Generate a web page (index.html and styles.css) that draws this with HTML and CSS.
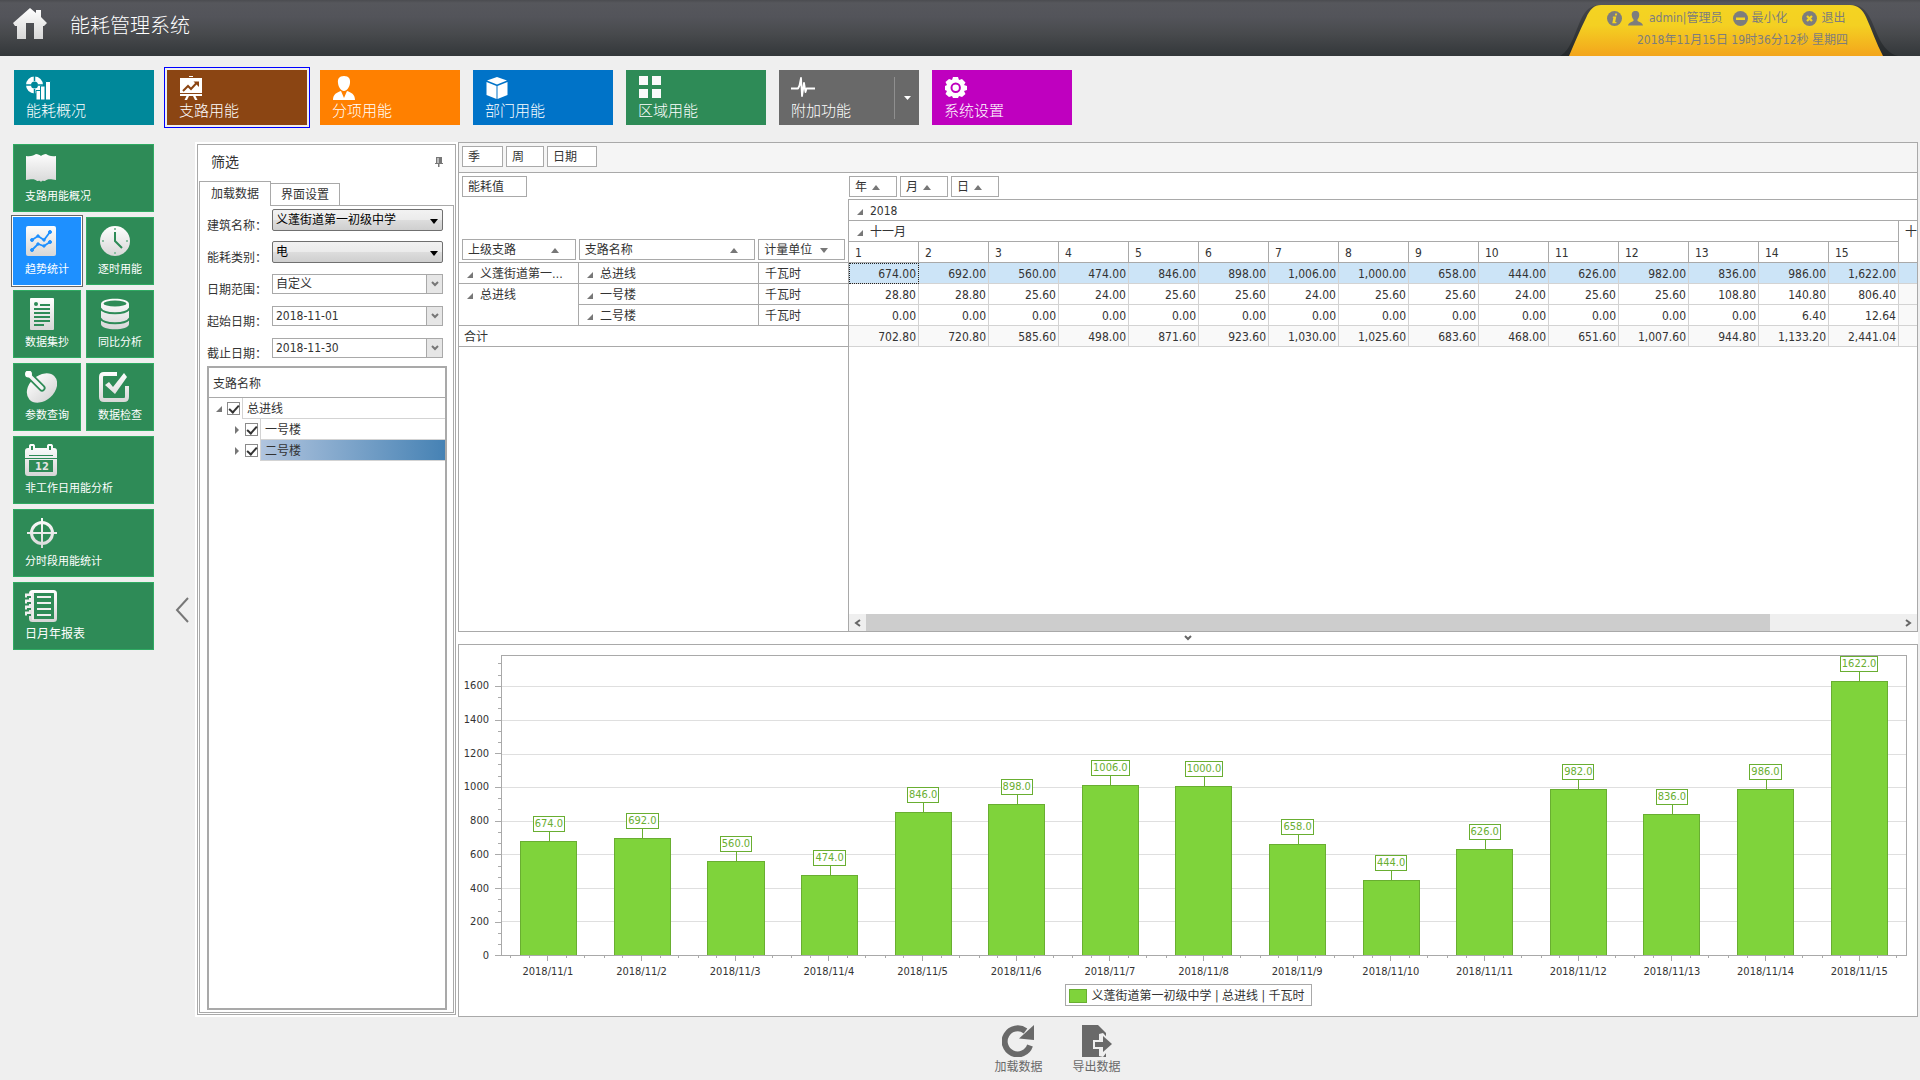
FILE: index.html
```html
<!DOCTYPE html>
<html lang="zh-CN">
<head>
<meta charset="utf-8">
<title>能耗管理系统</title>
<link rel="stylesheet" href="styles.css">
</head>
<body>
<svg class="defs" aria-hidden="true">
  <defs>
    <linearGradient id="silver" x1="0" y1="0" x2="0" y2="32" gradientUnits="userSpaceOnUse"><stop offset="0" stop-color="#fff"/><stop offset="1" stop-color="#d6d6d6"/></linearGradient>
    <linearGradient id="amber" x1="0" y1="0" x2="0" y2="1"><stop offset="0" stop-color="#f4d422"/><stop offset=".4" stop-color="#f4d022"/><stop offset="1" stop-color="#f3a51c"/></linearGradient>
    <linearGradient id="shade" x1="0" y1="0" x2="0" y2="1"><stop offset="0" stop-color="#45464a"/><stop offset="1" stop-color="#25292b"/></linearGradient>
  </defs>
</svg>

<header class="topbar">
  <a class="home" href="#" aria-label="首页">
    <svg width="34" height="32" viewBox="0 0 34 32"><path fill="url(#silver)" d="M0 15 17 0 23 5V2h5v7l6 6-3 3h-1v13H21V15h-8v16H4V18H2z"/></svg>
  </a>
  <h1>能耗管理系统</h1>
  <div class="account">
    <svg class="account-bg" width="340" height="56" viewBox="0 0 340 56" aria-hidden="true">
      <path fill="url(#shade)" d="M0 56C13 49 16 26 24 14 28 8 33 5 41 5H290C300 5 304 8 309 16 317 30 320 51 338 56z"/>
      <path fill="url(#amber)" d="M9 56C15 42 20 30 26 18 30 9 34 5 41 5H290C298 5 303 10 306 17 312 30 316 43 323 56z"/>
    </svg>
    <div class="account-row">
      <a href="#" aria-label="关于"><svg width="15" height="15" viewBox="0 0 15 15"><circle cx="7.500" cy="7.500" r="7.500" fill="#7d7d7d"/><path d="M8.200 2.500h2l-.4 2h-2zM6 5.500h3.300L8.200 11h1.300l-.3 1.200H5.300L6.400 6.700H5.700z" fill="#f4d422"/></svg></a>
      <a class="user" href="#"><svg width="15" height="15" viewBox="0 0 15 15"><path fill="#7d7d7d" d="M7.500 0c3 0 4 2 3.700 4.500-.2 2-1 3-1.700 4V10c1.500 1 5 1.500 5.500 4.500H0C.5 11.500 4 11 5.500 10V8.500c-.7-1-1.500-2-1.700-4C3.500 2 4.500 0 7.500 0z"/></svg><span>admin|管理员</span></a>
      <button type="button"><svg width="15" height="15" viewBox="0 0 15 15"><circle cx="7.500" cy="7.500" r="7.500" fill="#7d7d7d"/><path d="M3 6.500h9v2.500H3z" fill="#f4d422"/></svg><span>最小化</span></button>
      <button type="button" class="exit"><svg width="15" height="15" viewBox="0 0 15 15"><circle cx="7.500" cy="7.500" r="7.500" fill="#7d7d7d"/><path d="m5 5 5 5m0-5-5 5" stroke="#f4d422" stroke-width="2.200"/></svg><span>退出</span></button>
    </div>
    <time class="clock">2018年11月15日 19时36分12秒 星期四</time>
  </div>
</header>

<nav class="modules">
  <a class="module teal" href="#"><svg width="25" height="24" viewBox="0 0 25 24"><g fill="none" stroke="#fff" stroke-width="5"><circle cx="8.500" cy="9" r="6"/></g><path d="M8.500 0v5M8.500 13v6M0 9h5M12 9h6" stroke="#00889a" stroke-width="1.500"/><path fill="#fff" stroke="#00889a" d="M10 14.500h4.500V24H10zM14.500 10h4.500v14h-4.500zM19.500 5.500H24.500V24h-5z"/></svg><span>能耗概况</span></a>
  <a class="module brown active" href="#"><svg width="24" height="24" viewBox="0 0 24 24"><path fill="#fff" d="M10 0h4v1h-4zM1 2h22v15H1zM1 18h22v2H1zM7.500 20h2.500L8 24H5.500zM14 20h2.500l2 4H16z"/><path d="m4 15 5-5 3 3 6-6.500" fill="none" stroke="#8b4513" stroke-width="2"/><path d="M14.500 5.500H20V11z" fill="#8b4513"/></svg><span>支路用能</span></a>
  <a class="module orange" href="#"><svg width="24" height="24" viewBox="0 0 24 24"><path fill="#fff" d="M12 0c5 0 6.500 3 6 7-.4 4-3 8-6 8S6.400 11 6 7C5.500 3 7 0 12 0zM9 15l3 7 3-7c4 1.500 8 3 8 9H1c0-6 4-7.500 8-9z"/></svg><span>分项用能</span></a>
  <a class="module blue" href="#"><svg width="24" height="24" viewBox="0 0 24 24"><path fill="#fff" d="M12 1 22 4.500 12 8.500 2 4.500zM1.500 6l10 4v13l-10-4zM22.500 6l-10 4v13l10-4z"/></svg><span>部门用能</span></a>
  <a class="module green" href="#"><svg width="24" height="24" viewBox="0 0 24 24"><path fill="#fafafa" d="M1 0h9v9H1zM14 0h9v9h-9zM1 13h9v9H1zM14 13h9v9h-9z"/></svg><span>区域用能</span></a>
  <a class="module gray" href="#"><svg width="24" height="24" viewBox="0 0 24 24"><path d="M0 12.500h7l1.500-3L10 2l1 18 2-13 1.500 9 1-3.500H24" fill="none" stroke="#fff" stroke-width="1.800" stroke-linejoin="round"/></svg><span>附加功能</span><i class="more"><svg width="7" height="4" viewBox="0 0 7 4"><path d="M0 0h7L3.500 4z" fill="#fff"/></svg></i></a>
  <a class="module purple" href="#"><svg width="24" height="24" viewBox="0 0 24 24"><path fill="#fff" d="M9 1h5l1 3 3-1 3.500 3.500L20 9l3 1v4l-3 1 1.500 3L18 21l-3-1-1 2H9l-1-2-3 1-3.500-3L3 15l-2-1v-4l2-1-1.500-3L5 3l3 1z"/><circle cx="11.700" cy="11.700" r="4.200" fill="#fff" stroke="#bf00bf" stroke-width="2"/></svg><span>系统设置</span></a>
</nav>

<main class="workspace">
  <nav class="side">
    <a class="tile wide" href="#"><svg width="32" height="32" viewBox="0 0 32 32"><path fill="url(#silver)" d="M1 4c5 1 8-1 10-2 2 0 4 1 5 2 1-1 3-2 5-2 2 1 5 3 10 2v24c-6-1-9-1-11 1-1 0-3-1-4 1-1-2-3-1-4-1-2-2-5-2-11-1z"/></svg><span>支路用能概况</span></a>
    <a class="tile current" href="#"><svg width="32" height="32" viewBox="0 0 32 32"><rect x="1" y="1" width="30" height="30" rx="2" fill="url(#silver)"/><g fill="#1e90ff" stroke="#1e90ff"><path fill="none" stroke-width="1.800" d="m7 15 6-4 6 4 6-8M7 25l6-6 6 2 6-4"/><circle cx="7" cy="15" r="1.500"/><circle cx="13" cy="11" r="1.200"/><circle cx="19" cy="15" r="1.200"/><circle cx="25" cy="7" r="1.500"/><circle cx="7" cy="25" r="1.500"/><circle cx="13" cy="19" r="1.200"/><circle cx="19" cy="21" r="1.200"/><circle cx="25" cy="17" r="1.500"/></g></svg><span>趋势统计</span></a>
    <a class="tile" href="#"><svg width="32" height="32" viewBox="0 0 32 32"><circle cx="17" cy="16" r="15" fill="url(#silver)"/><path d="M17 7v9l7 7" fill="none" stroke="#2e8b57" stroke-width="2"/><path d="M16 3h2v2h-2zM16 27h2v2h-2zM4 15h2v2H4zM28 15h2v2h-2z" fill="#8cc0a3"/></svg><span>逐时用能</span></a>
    <a class="tile" href="#"><svg width="32" height="32" viewBox="0 0 32 32"><rect x="5" y="0" width="24" height="32" rx="1" fill="url(#silver)"/><path d="M15 7h10M9 11h16M9 15h16M9 19h16M9 23h16M9 27h10" stroke="#2e8b57" stroke-width="2"/><circle cx="11" cy="6" r="2" fill="#2e8b57"/></svg><span>数据集抄</span></a>
    <a class="tile" href="#"><svg width="32" height="32" viewBox="0 0 32 32"><path fill="url(#silver)" d="M3 6C3-1 31-1 31 6v20c0 7-28 7-28 0z"/><ellipse cx="17" cy="5.500" rx="11.500" ry="3" fill="#2e8b57"/><path d="M2 10c4 7 26 7 30 0M2 20c4 7 26 7 30 0" fill="none" stroke="#2e8b57" stroke-width="2"/></svg><span>同比分析</span></a>
    <a class="tile" href="#"><svg width="32" height="32" viewBox="0 0 32 32"><ellipse cx="17" cy="17" rx="17" ry="12.500" transform="rotate(-42 17 17)" fill="url(#silver)"/><path d="m3 3 14 14" stroke="#2e8b57" stroke-width="7" stroke-linecap="round"/><path d="m4 4 13 13" stroke="#f4f4f4" stroke-width="3.500" stroke-linecap="round"/><circle cx="3.500" cy="3" r="3.500" fill="#fff"/></svg><span>参数查询</span></a>
    <a class="tile" href="#"><svg width="32" height="32" viewBox="0 0 32 32"><path d="M19 3H6C4 3 3 4 3 6v20c0 2 1 3 3 3h20c2 0 3-1 3-3V15" fill="none" stroke="url(#silver)" stroke-width="4"/><path fill="url(#silver)" d="m7 14 4-3 4 5L26 2l3 4-12 17z"/></svg><span>数据检查</span></a>
    <a class="tile wide" href="#"><svg width="32" height="32" viewBox="0 0 32 32"><path fill="url(#silver)" fill-rule="evenodd" d="M3 4h1V2c0-3 6-3 6 0v2h12V2c0-3 6-3 6 0v2h1c2 0 3 1 3 3v22c0 2-1 3-3 3H3c-2 0-3-1-3-3V7c0-2 1-3 3-3zM6 2v4h2V2zM24 2v4h2V2zM4 16v12h24V16zM4 11h24v1H4z"/><path d="M0 14.500h32" stroke="#2e8b57"/><text x="10" y="26" class="cal-day">12</text></svg><span>非工作日用能分析</span></a>
    <a class="tile wide" href="#"><svg width="32" height="32" viewBox="0 0 32 32"><circle cx="17" cy="16" r="10.500" fill="none" stroke="url(#silver)" stroke-width="3"/><path fill="url(#silver)" d="M16 1h2v30h-2zM2 15h30v2H2z"/></svg><span>分时段用能统计</span></a>
    <a class="tile wide" href="#"><svg width="32" height="32" viewBox="0 0 32 32"><rect x="5.500" y="1.500" width="25" height="29" rx="2" fill="none" stroke="url(#silver)" stroke-width="3"/><path d="M8 3v27" stroke="#ececec" stroke-width="2"/><path d="M12 7h14M12 13h14M12 19h14M12 25h14" stroke="#f0f0f0" stroke-width="2"/><path d="M0 5.500h5M0 11.500h5M0 17.500h5M0 23.500h5" stroke="#f0f0f0" stroke-width="4"/><path d="M2 7h4M2 13h4M2 19h4M2 25h4" stroke="#2e8b57" stroke-width="2"/></svg><span class="big">日月年报表</span></a>
  </nav>

  <button class="collapse" type="button" aria-label="收起"><svg width="14" height="26" viewBox="0 0 14 26"><path d="M13 1 2 13l11 12" fill="none" stroke="#777" stroke-width="2"/></svg></button>

  <div class="content">
    <div class="boards">
      <section class="filter">
        <div class="filter-head"><h2>筛选</h2><svg width="8" height="10" viewBox="0 0 8 10"><path d="M1 0h6v6h1v1H0V6h1zM3 7h1.500v3H3z" fill="#777"/><path d="M3 1v5" stroke="#fff"/></svg></div>
        <div class="tabs"><button type="button" class="tab on">加载数据</button><button type="button" class="tab">界面设置</button><i></i></div>
        <div class="tab-page">
          <form class="fields">
            <label for="building">建筑名称：</label>
            <div class="glossy"><select id="building"><option>义蓬街道第一初级中学</option></select><svg width="8" height="5" viewBox="0 0 8 5"><path d="M0 0h8L4 5z"/></svg></div>
            <label for="kind">能耗类别：</label>
            <div class="glossy"><select id="kind"><option>电</option></select><svg width="8" height="5" viewBox="0 0 8 5"><path d="M0 0h8L4 5z"/></svg></div>
            <label for="range">日期范围：</label>
            <div class="combo"><input id="range" type="text" value="自定义"><button type="button" aria-label="展开"><svg width="8" height="6" viewBox="0 0 8 6"><path d="m1 1 3 3 3-3" fill="none" stroke="#777" stroke-width="2"/></svg></button></div>
            <label for="from">起始日期：</label>
            <div class="combo"><input id="from" type="text" value="2018-11-01"><button type="button" aria-label="展开"><svg width="8" height="6" viewBox="0 0 8 6"><path d="m1 1 3 3 3-3" fill="none" stroke="#777" stroke-width="2"/></svg></button></div>
            <label for="to">截止日期：</label>
            <div class="combo"><input id="to" type="text" value="2018-11-30"><button type="button" aria-label="展开"><svg width="8" height="6" viewBox="0 0 8 6"><path d="m1 1 3 3 3-3" fill="none" stroke="#777" stroke-width="2"/></svg></button></div>
          </form>
          <div class="tree">
            <div class="tree-head">支路名称</div>
            <div class="node"><svg width="6" height="6" viewBox="0 0 6 6"><path d="M6 0v6H0z" fill="#777"/></svg><input type="checkbox" id="n0" checked><label for="n0">总进线</label></div>
            <div class="node child"><svg width="6" height="8" viewBox="0 0 6 8"><path d="M1 0v8l4-4z" fill="#777"/></svg><input type="checkbox" id="n1" checked><label for="n1">一号楼</label></div>
            <div class="node child picked"><svg width="6" height="8" viewBox="0 0 6 8"><path d="M1 0v8l4-4z" fill="#777"/></svg><input type="checkbox" id="n2" checked><label for="n2">二号楼</label></div>
          </div>
        </div>
      </section>

      <div class="data">
        <section class="pivot">
          <div class="pivot-filter">
            <button type="button" class="field w41">季</button><button type="button" class="field w38">周</button><button type="button" class="field w50">日期</button>
          </div>
          <div class="pivot-body">
            <div class="pivot-rows">
              <div class="measure"><button type="button" class="field w65">能耗值</button></div>
              <div class="row-fields">
                <button type="button" class="field w114">上级支路<i class="up"></i></button><button type="button" class="field w177">支路名称<i class="up"></i></button><button type="button" class="field w87">计量单位<i class="down"></i></button>
              </div>
              <table class="row-table">
                <colgroup><col class="c1"><col class="c2"><col class="c3"></colgroup>
                <tbody>
                  <tr><th><i class="exp"></i>义蓬街道第一…</th><th><i class="exp"></i>总进线</th><td>千瓦时</td></tr>
                  <tr><th rowspan="2"><i class="exp"></i>总进线</th><th><i class="exp"></i>一号楼</th><td>千瓦时</td></tr>
                  <tr><th><i class="exp"></i>二号楼</th><td>千瓦时</td></tr>
                  <tr><th colspan="3" class="total">合计</th></tr>
                </tbody>
              </table>
            </div>
            <div class="pivot-cols">
              <div class="col-fields"><button type="button" class="field w48">年<i class="up"></i></button><button type="button" class="field w48">月<i class="up"></i></button><button type="button" class="field w48">日<i class="up"></i></button></div>
              <div class="grid-scroll">
                <table class="day-table">
                  <thead>
                    <tr><th colspan="16"><i class="exp"></i>2018</th></tr>
                    <tr><th colspan="15"><i class="exp"></i>十一月</th><th rowspan="2" class="next">十</th></tr>
                    <tr><th>1</th><th>2</th><th>3</th><th>4</th><th>5</th><th>6</th><th>7</th><th>8</th><th>9</th><th>10</th><th>11</th><th>12</th><th>13</th><th>14</th><th>15</th></tr>
                  </thead>
                  <tbody>
                    <tr class="sel"><td class="focus">674.00</td><td>692.00</td><td>560.00</td><td>474.00</td><td>846.00</td><td>898.00</td><td>1,006.00</td><td>1,000.00</td><td>658.00</td><td>444.00</td><td>626.00</td><td>982.00</td><td>836.00</td><td>986.00</td><td>1,622.00</td><td></td></tr>
                    <tr><td>28.80</td><td>28.80</td><td>25.60</td><td>24.00</td><td>25.60</td><td>25.60</td><td>24.00</td><td>25.60</td><td>25.60</td><td>24.00</td><td>25.60</td><td>25.60</td><td>108.80</td><td>140.80</td><td>806.40</td><td></td></tr>
                    <tr><td>0.00</td><td>0.00</td><td>0.00</td><td>0.00</td><td>0.00</td><td>0.00</td><td>0.00</td><td>0.00</td><td>0.00</td><td>0.00</td><td>0.00</td><td>0.00</td><td>0.00</td><td>6.40</td><td>12.64</td><td></td></tr>
                    <tr class="sum"><td>702.80</td><td>720.80</td><td>585.60</td><td>498.00</td><td>871.60</td><td>923.60</td><td>1,030.00</td><td>1,025.60</td><td>683.60</td><td>468.00</td><td>651.60</td><td>1,007.60</td><td>944.80</td><td>1,133.20</td><td>2,441.04</td><td></td></tr>
                  </tbody>
                </table>
              </div>
              <div class="hscroll">
                <button type="button" aria-label="向左"><svg width="7" height="8" viewBox="0 0 7 8"><path d="M6 1 2 4l4 3" fill="none" stroke="#666" stroke-width="2"/></svg></button>
                <div class="track"><div class="thumb"></div></div>
                <button type="button" aria-label="向右"><svg width="7" height="8" viewBox="0 0 7 8"><path d="m1 1 4 3-4 3" fill="none" stroke="#666" stroke-width="2"/></svg></button>
              </div>
            </div>
          </div>
        </section>

        <button type="button" class="splitter" aria-label="折叠"><svg width="8" height="6" viewBox="0 0 8 6"><path d="m1 1 3 3 3-3" fill="none" stroke="#666" stroke-width="2"/></svg></button>

        <section class="chart">
          <div class="plot-row">
            <div class="y-axis"><i></i><span>1600</span><span>1400</span><span>1200</span><span>1000</span><span>800</span><span>600</span><span>400</span><span>200</span><b>0</b></div>
            <svg class="y-ticks" width="6" height="100%" shape-rendering="crispEdges" stroke="#aaa">
              <line x1="0" x2="6" y1="10.400%" y2="10.400%"/><line x1="0" x2="6" y1="21.600%" y2="21.600%"/><line x1="0" x2="6" y1="32.800%" y2="32.800%"/><line x1="0" x2="6" y1="44%" y2="44%"/><line x1="0" x2="6" y1="55.200%" y2="55.200%"/><line x1="0" x2="6" y1="66.400%" y2="66.400%"/><line x1="0" x2="6" y1="77.600%" y2="77.600%"/><line x1="0" x2="6" y1="88.800%" y2="88.800%"/><line x1="0" x2="6" y1="99.800%" y2="99.800%"/>
              <line x1="3" x2="6" y1="2.930%" y2="2.930%"/><line x1="3" x2="6" y1="6.670%" y2="6.670%"/><line x1="3" x2="6" y1="14.130%" y2="14.130%"/><line x1="3" x2="6" y1="17.870%" y2="17.870%"/><line x1="3" x2="6" y1="25.330%" y2="25.330%"/><line x1="3" x2="6" y1="29.070%" y2="29.070%"/><line x1="3" x2="6" y1="36.530%" y2="36.530%"/><line x1="3" x2="6" y1="40.270%" y2="40.270%"/><line x1="3" x2="6" y1="47.730%" y2="47.730%"/><line x1="3" x2="6" y1="51.470%" y2="51.470%"/><line x1="3" x2="6" y1="58.930%" y2="58.930%"/><line x1="3" x2="6" y1="62.670%" y2="62.670%"/><line x1="3" x2="6" y1="70.130%" y2="70.130%"/><line x1="3" x2="6" y1="73.870%" y2="73.870%"/><line x1="3" x2="6" y1="81.330%" y2="81.330%"/><line x1="3" x2="6" y1="85.070%" y2="85.070%"/><line x1="3" x2="6" y1="92.530%" y2="92.530%"/><line x1="3" x2="6" y1="96.270%" y2="96.270%"/>
            </svg>
            <div class="plot">
              <div class="gridlines"><i></i><b></b><b></b><b></b><b></b><b></b><b></b><b></b><b></b></div>
              <div class="col"><span>674.0</span><div style="height:38%"></div></div>
              <div class="col"><span>692.0</span><div style="height:39%"></div></div>
              <div class="col"><span>560.0</span><div style="height:31.6%"></div></div>
              <div class="col"><span>474.0</span><div style="height:26.7%"></div></div>
              <div class="col"><span>846.0</span><div style="height:47.7%"></div></div>
              <div class="col"><span>898.0</span><div style="height:50.6%"></div></div>
              <div class="col"><span>1006.0</span><div style="height:56.7%"></div></div>
              <div class="col"><span>1000.0</span><div style="height:56.4%"></div></div>
              <div class="col"><span>658.0</span><div style="height:37.1%"></div></div>
              <div class="col"><span>444.0</span><div style="height:25.1%"></div></div>
              <div class="col"><span>626.0</span><div style="height:35.3%"></div></div>
              <div class="col"><span>982.0</span><div style="height:55.4%"></div></div>
              <div class="col"><span>836.0</span><div style="height:47.2%"></div></div>
              <div class="col"><span>986.0</span><div style="height:55.6%"></div></div>
              <div class="col"><span>1622.0</span><div style="height:91.5%"></div></div>
            </div>
          </div>
          <div class="x-axis">
            <span>2018/11/1</span><span>2018/11/2</span><span>2018/11/3</span><span>2018/11/4</span><span>2018/11/5</span><span>2018/11/6</span><span>2018/11/7</span><span>2018/11/8</span><span>2018/11/9</span><span>2018/11/10</span><span>2018/11/11</span><span>2018/11/12</span><span>2018/11/13</span><span>2018/11/14</span><span>2018/11/15</span>
          </div>
          <div class="legend"><i></i>义蓬街道第一初级中学 | 总进线 | 千瓦时</div>
        </section>
      </div>
    </div>

    <footer class="actions">
      <button type="button"><svg width="32" height="32" viewBox="0 0 32 32"><path d="M28 20.500A13 13 0 1 1 23.500 6" fill="none" stroke="#696969" stroke-width="6"/><path d="M32 0v15l-15-1.500z" fill="#696969"/></svg><span>加载数据</span></button>
      <button type="button"><svg width="32" height="32" viewBox="0 0 32 32"><path d="M1 0h16l8 8v24H1z" fill="#696969"/><path d="M12 15h6V9l4-1 10 11-10 13-4-1v-7h-6z" fill="#efefef"/><path d="M14 17h8v-6l9 8-9 8v-5h-8z" fill="#696969"/></svg><span>导出数据</span></button>
    </footer>
  </div>
</main>
</body>
</html>
```
FILE: styles.css
```css
* { box-sizing: border-box; }

body {
  margin: 0;
  min-height: 100vh;
  display: flex;
  flex-direction: column;
  background: #efefef;
  color: #333;
  font: 12px/16px "DejaVu Sans Condensed", "Noto Sans CJK SC", sans-serif;
}

a { color: inherit; text-decoration: none; }
button, input, select { font: inherit; color: inherit; margin: 0; padding: 0; border: 0; background: none; border-radius: 0; outline: 0; }
button { text-align: left; }
svg { display: block; flex: none; }
h1, h2 { margin: 0; font-weight: normal; }
.defs { position: absolute; width: 0; height: 0; }

/* top bar */
.topbar {
  height: 56px;
  display: flex;
  background: linear-gradient(#4b4c50, #56575c 3px, #53545a 30%, #484a4d 60%, #33373a);
  color: #fff;
}
.home { padding: 8px 0 0 13px; }
.topbar h1 { margin-left: 23px; font-size: 20px; line-height: 52px; font-weight: 300; }
.account {
  position: relative;
  width: 340px;
  margin: 0 20px 0 auto;
  padding: 8px 0 0 47px;
  color: #7d7d7d;
}
.account-bg { position: absolute; left: 0; top: 0; }
.account-row { position: relative; display: flex; gap: 6px; height: 20px; align-items: center; }
.account-row a, .account-row button { display: flex; align-items: center; gap: 3px; }
.account-row .user { gap: 6px; margin-right: 5px; }
.account-row .exit { gap: 5px; margin-left: 8px; }
.clock { position: relative; display: block; padding-left: 30px; line-height: 24px; }

/* module tiles */
.modules { display: flex; gap: 13px; padding: 14px 14px 17px; }
.module {
  position: relative;
  width: 140px;
  height: 55px;
  padding: 6px 12px 0;
  color: #fff;
  font-size: 15px;
  line-height: 22px;
  font-weight: 300;
}
.module.active { outline: 1px solid #00f; outline-offset: 2px; }
.teal { background: #00889a; }
.brown { background: #8b4513; }
.orange { background: #ff8000; }
.blue { background: #0073c8; }
.green { background: #2e8b57; }
.gray { background: #696969; }
.purple { background: #bf00bf; }
.more { position: absolute; right: 0; top: 7px; height: 42px; width: 25px; border-left: 1px solid #8f8f8f; display: flex; align-items: center; justify-content: center; }

/* workspace */
.workspace { flex: 1; display: flex; }
.side { display: grid; grid-template-columns: 68px 68px; grid-auto-rows: 68px; gap: 5px; padding: 2px 0 0 13px; }
.tile {
  padding: 7px 11px 0;
  background: #2e8b57;
  border: 1px solid #2faa62;
  color: #fff;
  font-size: 11px;
  line-height: 16px;
  white-space: nowrap;
}
.tile span { display: block; margin-top: 5px; }
.tile .big { margin-top: 4px; font-size: 12px; }
.tile.wide { grid-column: span 2; }
.tile.current { background: #1e90ff; border-color: #1e90ff; box-shadow: 0 0 0 1px #fff, 0 0 0 2px #666; }
.cal-day { font: bold 11px "DejaVu Sans Condensed", sans-serif; fill: #e4e4e4; }
.collapse { align-self: flex-start; margin: 455px 6px 0 21px; }

.content { flex: 1; min-width: 0; display: flex; flex-direction: column; padding-right: 2px; }
.boards { flex: 1; display: flex; background: #fff; padding-left: 2px; }

/* filter panel */
.filter { width: 259px; margin: 2px 0; padding: 0 1px 1px; border: 1px solid #a9a9a9; display: flex; flex-direction: column; }
.filter-head { display: flex; justify-content: space-between; align-items: center; height: 36px; padding: 0 11px 2px 12px; }
.filter-head h2 { font-size: 14px; line-height: 20px; }
.tabs { display: flex; align-items: flex-end; height: 25px; }
.tab { width: 69px; height: 23px; padding-left: 10px; border: 1px solid #a9a9a9; border-left: 0; }
.tab.on { width: 72px; height: 25px; padding-left: 11px; border: 1px solid #a9a9a9; border-bottom: 0; }
.tabs i { flex: 1; border-bottom: 1px solid #a9a9a9; }
.tab-page { flex: 1; display: flex; flex-direction: column; padding: 0 5px 2px 7px; border: 1px solid #a9a9a9; border-top: 0; }
.fields { display: grid; grid-template-columns: 65px 171px; grid-auto-rows: 32px; align-items: start; }
.fields label { padding-top: 12px; white-space: nowrap; }
.glossy { position: relative; height: 22px; margin-top: 3px; border: 1px solid #707070; border-radius: 2px; background: linear-gradient(#f2f2f2, #ebebeb 50%, #ddd 50%, #cfcfcf); color: #000; }
.glossy select { display: block; appearance: none; width: 100%; height: 20px; padding-left: 3px; }
.glossy svg { position: absolute; right: 4px; top: 9px; pointer-events: none; }
.combo { display: flex; height: 20px; margin-top: 4px; border: 1px solid #a9a9a9; }
.combo input { flex: 1; min-width: 0; padding-left: 3px; }
.combo button { width: 16px; border-left: 1px solid #a9a9a9; background: #e6e6e6; display: flex; align-items: center; justify-content: center; }

.tree { flex: 1; width: 240px; border: 2px solid #a9a9a9; }
.tree-head { height: 30px; padding-left: 4px; line-height: 32px; border-bottom: 1px solid #a9a9a9; }
.node { display: flex; align-items: center; height: 21px; padding-left: 7px; }
.node.child { padding-left: 25px; }
.node input { appearance: none; position: relative; width: 13px; height: 13px; margin: 0 2px 0 5px; border: 1px solid #8a8a8a; }
.node input:checked::after { content: ""; position: absolute; left: 3px; top: 0; width: 4px; height: 8px; border: solid #333; border-width: 0 2px 2px 0; transform: rotate(42deg); }
.node label { flex: 1; height: 21px; padding-left: 4px; line-height: 22px; border-left: 1px solid #d3d3d3; border-bottom: 1px solid #d3d3d3; }
.node.picked label { background: linear-gradient(90deg, #b0c4de, #4682b4); }

/* pivot */
.data { flex: 1; min-width: 0; margin-left: 2px; display: flex; flex-direction: column; }
.pivot { height: 490px; border: 1px solid #a9a9a9; display: flex; flex-direction: column; }
.pivot-filter { display: flex; gap: 3px; height: 30px; padding: 3px; background: #f5f5f5; border-bottom: 1px solid #a9a9a9; }
.field { display: flex; align-items: center; height: 21px; padding: 1px 6px 0 5px; border: 1px solid #a9a9a9; background: #fff; white-space: nowrap; }
.w38 { width: 38px; }
.w41 { width: 41px; }
.w48 { width: 48px; }
.w50 { width: 50px; }
.w65 { width: 65px; }
.w87 { width: 87px; }
.w114 { width: 114px; }
.w177 { width: 177px; }
.up, .down { border: 4px solid transparent; }
.up { border-bottom: 5px solid #777; border-top: 0; }
.down { border-top: 5px solid #777; border-bottom: 0; }
.row-fields i { margin: 0 10px 0 auto; }
.col-fields i { margin-left: 5px; }
.pivot-body { flex: 1; display: flex; min-height: 0; }
.pivot-rows { width: 389px; }
.measure { height: 66px; padding: 3px; }
.row-fields { display: flex; gap: 3px; height: 24px; padding: 0 3px; border-bottom: 1px solid #a9a9a9; }
table { border-collapse: separate; border-spacing: 0; table-layout: fixed; }
.row-table { width: 100%; }
.c1 { width: 120px; }
.c2 { width: 180px; }
th, td { height: 21px; padding: 2px 0 0; font-weight: normal; line-height: 18px; white-space: nowrap; }
.row-table th, .row-table td { text-align: left; vertical-align: top; padding-left: 8px; border: solid #a9a9a9; border-width: 0 1px 1px 0; }
.row-table td { padding-left: 6px; border-right: 0; }
.row-table .total { padding-left: 5px; border-right: 0; }
.exp { display: inline-block; margin-right: 7px; border-left: 6px solid transparent; border-bottom: 6px solid #777; }

.pivot-cols { flex: 1; min-width: 0; display: flex; flex-direction: column; }
.col-fields { display: flex; gap: 3px; height: 26px; padding: 3px 1px; }
.grid-scroll { flex: 1; overflow: hidden; border-top: 1px solid #a9a9a9; border-left: 1px solid #a9a9a9; }
.day-table { width: 1120px; }
.day-table th { text-align: left; padding-left: 6px; border: solid #a9a9a9; border-width: 0 1px 1px 0; }
.day-table th .exp { margin-left: 2px; }
.day-table .next { vertical-align: top; }
.day-table td { text-align: right; padding-right: 2px; border: solid #d3d3d3; border-width: 0 1px 1px 0; }
.day-table .sel td { background: #cce4f7; }
.day-table .sel .focus { outline: 1px dotted #222; outline-offset: -1px; }
.day-table .sum td, .day-table td:last-child { background: #f9f9f9; }
.day-table .sel td:last-child { background: #cce4f7; }
.hscroll { display: flex; height: 17px; background: #efefef; border-left: 1px solid #a9a9a9; }
.hscroll button { width: 17px; display: flex; align-items: center; justify-content: center; }
.track { flex: 1; }
.thumb { width: 87.4%; height: 100%; background: #cdcdcd; }
.splitter { height: 12px; display: flex; align-items: center; justify-content: center; }

/* chart */
.chart { flex: 1; display: flex; flex-direction: column; padding: 10px 10px 10px 0; border: 1px solid #a9a9a9; }
.plot-row { flex: 1; display: flex; font-size: 11px; line-height: 14px; }
.y-axis { width: 30px; display: flex; flex-direction: column; text-align: right; }
.y-axis i, .gridlines i { flex: 186 1 0; }
.y-axis span, .gridlines b { flex: 200 1 0; min-height: 0; }
.y-axis span { margin: -7px 0 7px; }
.y-axis b { height: 0; margin: -7px 0 7px; font-weight: normal; }
.y-ticks { margin-left: 6px; height: auto; }
.plot { position: relative; flex: 1; display: flex; border: 1px solid #a9a9a9; }
.gridlines { position: absolute; inset: 0; display: flex; flex-direction: column; }
.gridlines b { border-top: 1px solid #dfdfdf; }
.col { position: relative; flex: 1; display: flex; flex-direction: column; align-items: center; justify-content: flex-end; }
.col span { position: relative; height: 16px; margin-bottom: 9px; padding: 0 1px; font-size: 11px; color: #69ae31; background: #fff; border: 1px solid #69ae31; }
.col span::after { content: ""; position: absolute; left: 50%; top: 15px; height: 9px; border-left: 1px solid #69ae31; }
.col div { width: 61%; flex: none; background: #7fd33b; border: 1px solid #69ae31; border-bottom: 0; }
.x-axis { display: flex; margin: 0 1px 0 42px; font-size: 11px; line-height: 14px; }
.x-axis span { position: relative; flex: 1; padding: 9px 0 5px; text-align: center; background: linear-gradient(#a9a9a9, #a9a9a9) 50% 0 / 1px 5px no-repeat, linear-gradient(#a9a9a9, #a9a9a9) 10% 0 / 1px 2px no-repeat, linear-gradient(#a9a9a9, #a9a9a9) 30% 0 / 1px 2px no-repeat, linear-gradient(#a9a9a9, #a9a9a9) 70% 0 / 1px 2px no-repeat, linear-gradient(#a9a9a9, #a9a9a9) 90% 0 / 1px 2px no-repeat; }
.legend { align-self: center; margin-left: 10px; display: flex; align-items: center; gap: 5px; height: 22px; padding: 1px 6px 0 3px; border: 1px solid #a9a9a9; }
.legend i { width: 18px; height: 14px; background: #7fd33b; border: 1px solid #69ae31; }

/* bottom actions */
.actions { height: 63px; display: flex; justify-content: center; gap: 30px; padding: 8px 0 0 2px; color: #696969; }
.actions button { display: flex; flex-direction: column; align-items: center; gap: 2px; height: 50px; }
```
